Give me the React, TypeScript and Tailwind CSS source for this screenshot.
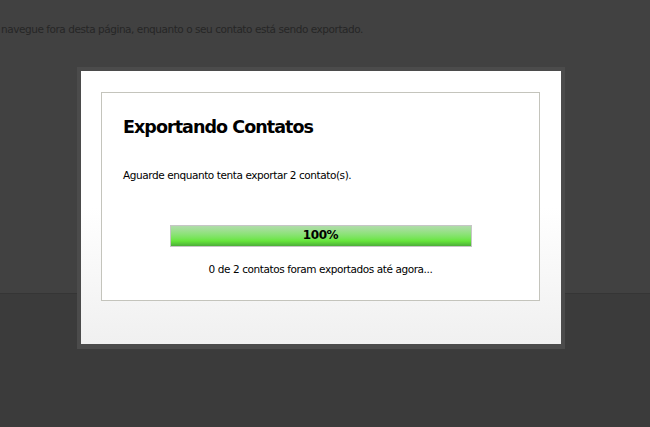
import React from 'react';

const App: React.FC = () => {
  const exported = 0;
  const total = 2;
  const percent = 100;

  return (
    <div className="relative w-[650px] h-[427px] overflow-hidden bg-[#3b3b3b] font-['DejaVu_Sans',Verdana,sans-serif]">
      {/* page under the overlay */}
      <div className="h-[294px] bg-[#414141] border-b border-[#353535]">
        <p className="pt-[22px] pl-px text-[10.5px] tracking-[-0.45px] text-[#262626]">
          navegue fora desta página, enquanto o seu contato está sendo exportado.
        </p>
      </div>

      {/* modal */}
      <div className="absolute left-[77px] top-[67px] w-[488px] h-[282px] border-[4px] border-b-[5px] border-[#4b4b4b]">
        <div className="h-full bg-gradient-to-b from-white from-50% to-[#f0f0f0] pt-[21px] pl-[20px] pr-[21px]">
          <div className="h-[209px] border border-[#c4c4bc] bg-white pt-[22px] pl-[21px] pr-[21px]">
            <h2 className="text-[17.5px] font-bold leading-[24px] tracking-[-0.95px] text-black">Exportando Contatos</h2>
            <p className="mt-[28px] text-[10.5px] leading-[16px] tracking-[-0.42px] text-black">
              Aguarde enquanto tenta exportar {total} contato(s).
            </p>
            <div className="mt-[42px] mx-auto w-[302px] h-[22px] border border-[#c6c6c6]">
              <div
                className="h-full bg-gradient-to-b from-[#b0dcaa] via-[#66e63a] via-75% to-[#4cae38] flex items-center justify-center pb-[3px]"
                style={{ width: `${percent}%` }}
              >
                <span className="text-[12px] leading-[14px] font-bold text-black tracking-[-0.4px]">{percent}%</span>
              </div>
            </div>
            <p className="mt-[14px] text-center text-[10.5px] leading-[16px] tracking-[-0.42px] text-black">
              {exported} de {total} contatos foram exportados até agora...
            </p>
          </div>
        </div>
      </div>
    </div>
  );
};

export default App;
